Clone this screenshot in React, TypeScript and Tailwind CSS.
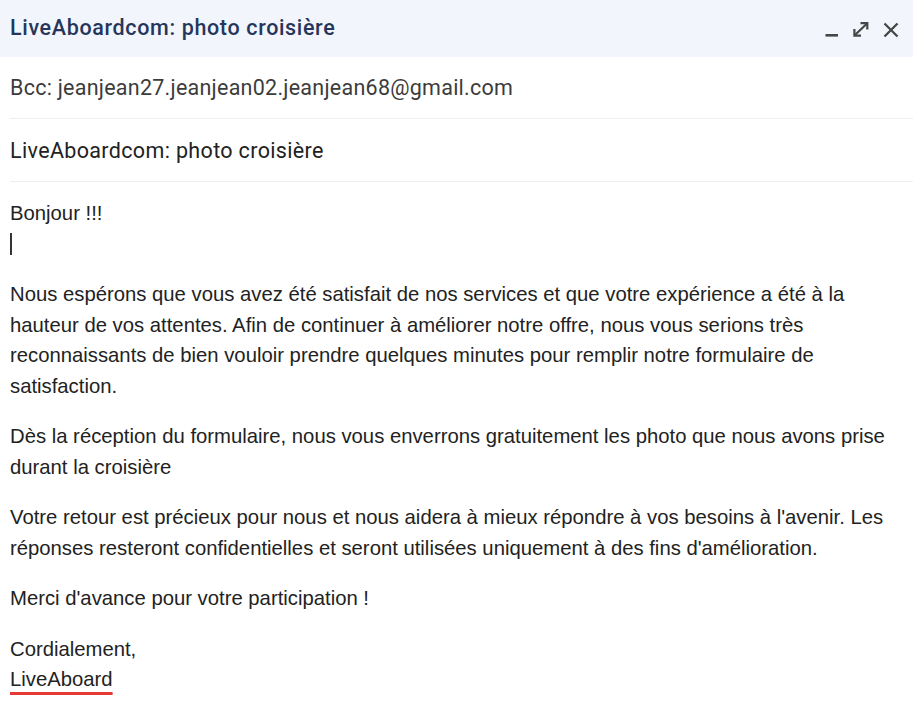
import React from "react";

const body = "font-['Liberation_Sans',Arial,sans-serif] text-[20.3px] leading-[30.5px] text-[#222222]";

export default function App() {
  return (
    <div className="w-[913px] h-[709px] bg-white overflow-hidden">
      <div className="h-[57px] bg-[#f2f6fc] flex items-center justify-between pl-[10px] pr-[14px]">
        <div className="font-['Roboto',sans-serif] text-[21.5px] font-medium text-[#26365a] tracking-[0.65px]">
          LiveAboardcom: photo croisière
        </div>
        <div className="flex items-center gap-[13px] mt-[2px]">
          <svg width="14" height="16" viewBox="0 0 14 16"><rect x="0.5" y="12" width="12.5" height="2.6" fill="#444746" /></svg>
          <svg width="18" height="17" viewBox="0 0 18 17" fill="none" stroke="#444746" strokeWidth="2.2">
            <path d="M3 14 L15 2.5" />
            <path d="M8.5 2.2 H15.3 V8.5" />
            <path d="M2.4 8 V14.6 H9" />
          </svg>
          <svg width="16" height="16" viewBox="0 0 16 16" fill="none" stroke="#444746" strokeWidth="2.3">
            <path d="M1.5 1.5 L14.5 14.5 M14.5 1.5 L1.5 14.5" />
          </svg>
        </div>
      </div>
      <div className="pl-[10px]">
        <div className="h-[62px] flex items-center pt-[2px] border-b border-[#efefef] font-['Roboto',sans-serif] text-[21.5px] tracking-[0.25px] text-[#3c3c3c]">
          Bcc: jeanjean27.jeanjean02.jeanjean68@gmail.com
        </div>
        <div className="h-[63px] flex items-center pt-[3px] border-b border-[#efefef] font-['Roboto',sans-serif] text-[21.5px] tracking-[0.35px] text-[#222222]">
          LiveAboardcom: photo croisière
        </div>
      </div>
      <div className={`pl-[10px] pt-[16px] ${body}`}>
        <div>Bonjour !!!</div>
        <div className="h-[30.5px] flex items-center"><span className="w-[2px] h-[22px] bg-[#333]" /></div>
        <div className="mt-[20px]">
          <div>Nous espérons que vous avez été satisfait de nos services et que votre expérience a été à la</div>
          <div>hauteur de vos attentes. Afin de continuer à améliorer notre offre, nous vous serions très</div>
          <div>reconnaissants de bien vouloir prendre quelques minutes pour remplir notre formulaire de</div>
          <div>satisfaction.</div>
        </div>
        <div className="mt-[20px]">
          <div>Dès la réception du formulaire, nous vous enverrons gratuitement les photo que nous avons prise</div>
          <div>durant la croisière</div>
        </div>
        <div className="mt-[20px]">
          <div>Votre retour est précieux pour nous et nous aidera à mieux répondre à vos besoins à l'avenir. Les</div>
          <div>réponses resteront confidentielles et seront utilisées uniquement à des fins d'amélioration.</div>
        </div>
        <div className="mt-[20px]">Merci d'avance pour votre participation !</div>
        <div className="mt-[20px]">
          <div>Cordialement,</div>
          <div><span className="underline decoration-[#e53935] decoration-[2.5px] underline-offset-[6px]">LiveAboard</span></div>
        </div>
      </div>
    </div>
  );
}
